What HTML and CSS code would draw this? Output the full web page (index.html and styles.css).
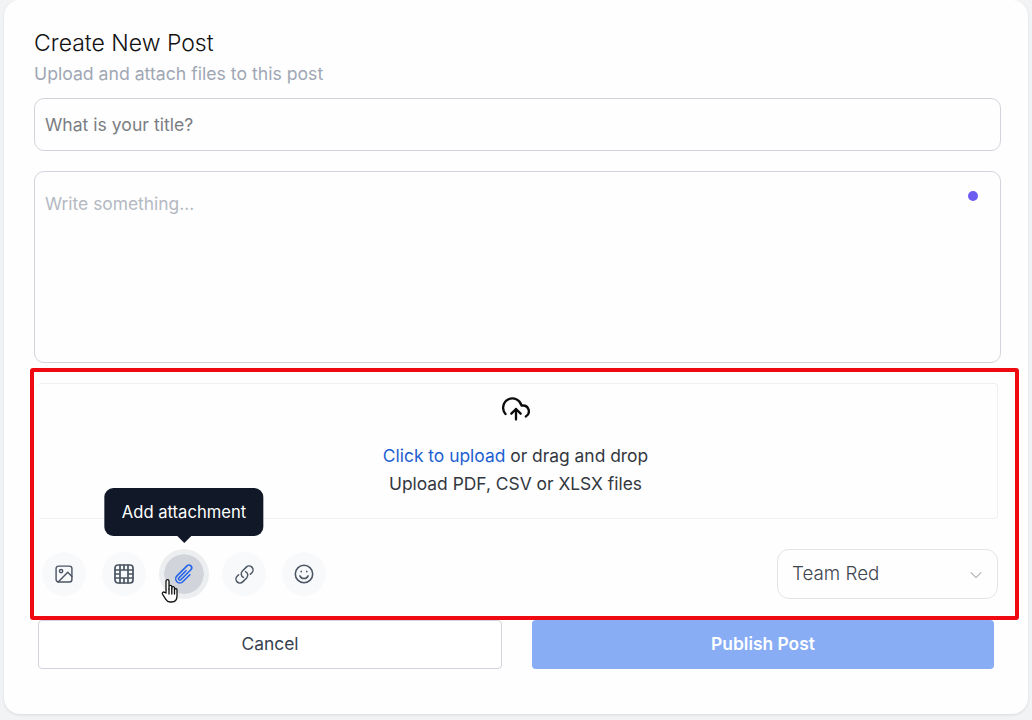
FILE: index.html
```html
<!DOCTYPE html>
<html lang="en">
  <head>
    <meta charset="UTF-8" />
    <title>Create New Post</title>
    <link rel="stylesheet" href="styles.css">
  </head>
  <body>
    <div class="card">
      <h1>Create New Post</h1>
      <p class="subtitle">Upload and attach files to this post</p>
      <div class="field title-field">What is your title?</div>
      <div class="field body-field">
        <span>Write something...</span>
        <span class="dot"></span>
      </div>

      <div class="upload-area">
        <div class="dropzone">
          <svg class="cloud" viewBox="0 0 24 24">
            <path d="M16 16l-4-4-4 4M12 12v9" />
            <path d="M20.39 18.39A5 5 0 0 0 18 9h-1.26A8 8 0 1 0 3 16.3" />
          </svg>
          <p><a href="#">Click to upload</a> or drag and drop</p>
          <p>Upload PDF, CSV or XLSX files</p>
        </div>

        <div class="toolbar">
          <div class="tools">
            <button class="tool">
              <svg class="icon-image" viewBox="0 0 24 24">
                <rect x="2.500" y="2.500" width="19" height="19" rx="3" />
                <circle cx="8.500" cy="8.500" r="2" />
                <path d="M21.500 15l-5-5L5 21.500" />
              </svg>
            </button>
            <button class="tool">
              <svg class="icon-film" viewBox="0 0 24 24">
                <rect x="3" y="3" width="18" height="18" rx="3" />
                <path d="M3 8h18M3 16h18M3 12h5M16 12h5M8 3v18M16 3v18M12 3v5M12 16v5" />
              </svg>
            </button>
            <button class="tool active">
              <svg class="icon-clip" viewBox="0 0 24 24">
                <path d="m18.375 12.739-7.693 7.693a4.500 4.500 0 0 1-6.364-6.364l10.94-10.94A3 3 0 1 1 19.500 7.372L8.552 18.320m.009-.01-.01.01m5.699-9.941-7.810 7.810a1.500 1.500 0 0 0 2.112 2.130" />
              </svg>
              <span class="tooltip">Add attachment</span>
              <svg class="hand" viewBox="0 0 18 26">
                <path d="M5 15V3.200a1.500 1.500 0 0 1 3 0V11l0-2.200a1.400 1.400 0 0 1 2.800 0V11l0-1.400a1.400 1.400 0 0 1 2.700 0V11.600a1.300 1.300 0 0 1 2.500 0V18c0 3.500-2 6-5.500 6H9c-2 0-3.200-1-4.200-2.600L1.400 16c-.7-1.100 1-2.600 2.100-1.600z" />
                <path d="M8 11v5M10.800 11v5M13.500 11.500V16" />
              </svg>
            </button>
            <button class="tool">
              <svg class="icon-link" viewBox="0 0 24 24">
                <path d="M13.190 8.688a4.500 4.500 0 0 1 1.242 7.244l-4.500 4.500a4.500 4.500 0 0 1-6.364-6.364l1.757-1.757m13.350-.622 1.757-1.757a4.500 4.500 0 0 0-6.364-6.364l-4.500 4.500a4.500 4.500 0 0 0 1.242 7.244" />
              </svg>
            </button>
            <button class="tool">
              <svg class="icon-smile" viewBox="0 0 24 24">
                <circle cx="12" cy="12" r="9.500" />
                <path d="M7.500 14c1 2 2.600 3 4.500 3s3.500-1 4.500-3" />
                <path d="M9 9v.5M15 9v.5" />
              </svg>
            </button>
          </div>
          <div class="team-select">
            <span>Team Red</span>
            <svg viewBox="0 0 16 16"><path d="M2 5l6 6 6-6" /></svg>
          </div>
        </div>
        <div class="highlight"></div>
      </div>

      <div class="actions">
        <button class="btn cancel">Cancel</button>
        <button class="btn publish">Publish Post</button>
      </div>
    </div>
  </body>
</html>
```

FILE: styles.css
```css
* {
  box-sizing: border-box;
}
body {
  margin: 0;
  height: 720px;
  padding: 0 4px;
  overflow: hidden;
  font-family: Inter, "Noto Sans", sans-serif;
  background-color: #f1f3f4;
}
.card {
  height: 714px;
  padding: 29px 27px 0 30px;
  border-radius: 16px;
  background-color: #fefefe;
  box-shadow: 0 1px 3px rgba(0, 0, 0, 0.1);
}
h1 {
  margin: 0;
  font-size: 23px;
  line-height: 28px;
  font-weight: 300;
  color: #111111;
}
.subtitle {
  margin: 3px 0 0 0;
  font-size: 17.65px;
  line-height: 28px;
  color: #a0a7b4;
}
.field {
  border: 1px solid #d1d5db;
  border-radius: 10px;
  padding: 0 10px;
  font-size: 17.6px;
}
.title-field {
  height: 53px;
  margin-top: 10px;
  line-height: 51px;
  color: #7a7d82;
}
.body-field {
  display: flex;
  justify-content: space-between;
  height: 192px;
  margin-top: 20px;
  padding-top: 20px;
  padding-right: 22px;
  line-height: 24px;
  font-size: 17.4px;
  color: #b4b9c2;
}
.dot {
  width: 10px;
  height: 10px;
  margin-top: -1px;
  border-radius: 50%;
  background-color: #6c5cf0;
}
.upload-area {
  position: relative;
  margin: 20px 3px 0 4px;
}
.dropzone {
  height: 136px;
  padding: 11px 4px 0 0;
  border: 1px solid #eef0f2;
  border-left: none;
  border-radius: 4px;
  text-align: center;
  font-size: 17.4px;
  line-height: 28px;
  color: #33383f;
}
.dropzone p {
  margin: 0;
}
.dropzone a {
  color: #1d5fd1;
  text-decoration: none;
}
.cloud {
  display: block;
  width: 28px;
  height: 28px;
  margin: 0 auto 19px auto;
  fill: none;
  stroke: #0b0b0b;
  stroke-width: 2;
  stroke-linecap: round;
  stroke-linejoin: round;
}
.toolbar {
  display: flex;
  justify-content: space-between;
  align-items: center;
  height: 50px;
  margin-top: 30px;
}
.tools {
  display: flex;
  gap: 16px;
  padding-left: 4px;
}
.tool {
  position: relative;
  display: flex;
  justify-content: center;
  align-items: center;
  width: 44px;
  height: 44px;
  padding: 0;
  border: none;
  border-radius: 50%;
  background-color: #f8f9fa;
}
.tool svg {
  fill: none;
  stroke: #4b5563;
  stroke-width: 1.7;
  stroke-linecap: round;
  stroke-linejoin: round;
}
.icon-image {
  width: 20px;
  height: 20px;
}
.icon-film {
  width: 24px;
  height: 24px;
}
.icon-clip,
.icon-smile {
  width: 22px;
  height: 22px;
}
.icon-link {
  width: 21px;
  height: 21px;
}
.tool.active {
  border: 2px solid #eceef0;
  background-color: #d1d5db;
  background-clip: padding-box;
  box-shadow: 0 0 0 3px #eceef0;
}
.tool.active .icon-clip {
  stroke: #2563eb;
}
.tool .hand {
  position: absolute;
  left: -3px;
  top: 24px;
  width: 18px;
  height: 26px;
  fill: #fff;
  stroke: #111;
  stroke-width: 1.3;
}
.tooltip {
  position: absolute;
  left: 50%;
  bottom: 58px;
  transform: translateX(-50%);
  padding: 0 17.5px;
  border-radius: 9px;
  background-color: #111827;
  color: #fff;
  font-family: Inter, "Noto Sans", sans-serif;
  font-size: 16.6px;
  line-height: 48px;
  white-space: nowrap;
}
.tooltip::after {
  content: "";
  position: absolute;
  left: 50%;
  bottom: -7px;
  margin-left: -8px;
  border-left: 8px solid transparent;
  border-right: 8px solid transparent;
  border-top: 8px solid #111827;
}
.team-select {
  display: flex;
  justify-content: space-between;
  align-items: center;
  width: 221px;
  height: 50px;
  padding: 0 14px 2px 14px;
  border: 1px solid #e2e4e8;
  border-radius: 12px;
  font-size: 18.800px;
  font-weight: 300;
  color: #3f4650;
}
.team-select svg {
  width: 14px;
  height: 14px;
  margin-top: 3px;
  fill: none;
  stroke: #a8adb5;
  stroke-width: 1.2;
}
.highlight {
  position: absolute;
  left: -8px;
  right: -21px;
  top: -15px;
  bottom: -21px;
  border: 4px solid #ee0a10;
  border-radius: 3px;
}
.actions {
  display: flex;
  gap: 30px;
  margin: 21px 4px 0 4px;
  padding-right: 3px;
}
.btn {
  flex: 1;
  height: 49px;
  padding: 0 0 2px 0;
  border-radius: 4px;
  font-family: Inter, "Noto Sans", sans-serif;
  font-size: 17.4px;
}
.cancel {
  border: 1px solid #d1d5db;
  background-color: #fff;
  color: #374151;
}
.publish {
  border: none;
  background-color: #88adf5;
  color: #fff;
  font-weight: 600;
}
```
